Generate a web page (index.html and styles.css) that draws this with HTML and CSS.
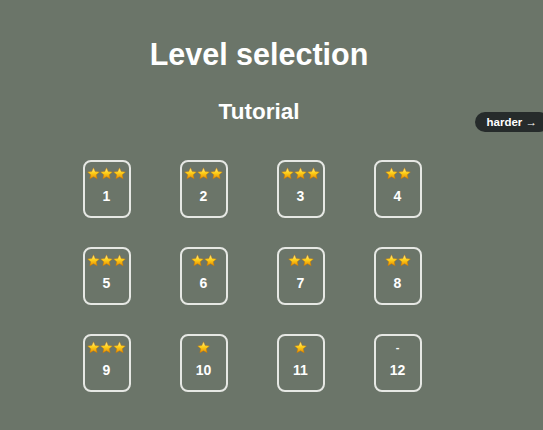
FILE: index.html
```html
<!DOCTYPE html>
<html lang="en">
<head>
    <meta charset="UTF-8">
    <meta name="viewport" content="width=device-width, initial-scale=1.0">
    <title>Level selection</title>
    <link rel="stylesheet" href="styles.css">
</head>
<body>
    <svg width="0" height="0" class="defs">
        <defs>
            <linearGradient id="gold" x1="0" y1="0" x2="0" y2="1">
                <stop offset="0" stop-color="#fff3a0"/>
                <stop offset="0.45" stop-color="#ffd21a"/>
                <stop offset="1" stop-color="#e88a00"/>
            </linearGradient>
            <symbol id="star" viewBox="0 0 24 24">
                <path d="M12 1.5l3.2 7 7.6.8-5.7 5.1 1.6 7.5L12 18l-6.7 3.9 1.6-7.5L1.2 9.3l7.6-.8z" fill="url(#gold)" stroke="#c97a00" stroke-width="0.8"/>
            </symbol>
        </defs>
    </svg>

    <div class="harder">harder &rarr;</div>

    <div class="page">
        <h1 class="title">Level selection</h1>
        <h2 class="subtitle">Tutorial</h2>

        <div class="levels">
            <div class="level"><div class="stars"><svg><use href="#star"/></svg><svg><use href="#star"/></svg><svg><use href="#star"/></svg></div><div class="num">1</div></div>
            <div class="level"><div class="stars"><svg><use href="#star"/></svg><svg><use href="#star"/></svg><svg><use href="#star"/></svg></div><div class="num">2</div></div>
            <div class="level"><div class="stars"><svg><use href="#star"/></svg><svg><use href="#star"/></svg><svg><use href="#star"/></svg></div><div class="num">3</div></div>
            <div class="level"><div class="stars"><svg><use href="#star"/></svg><svg><use href="#star"/></svg></div><div class="num">4</div></div>

            <div class="level"><div class="stars"><svg><use href="#star"/></svg><svg><use href="#star"/></svg><svg><use href="#star"/></svg></div><div class="num">5</div></div>
            <div class="level"><div class="stars"><svg><use href="#star"/></svg><svg><use href="#star"/></svg></div><div class="num">6</div></div>
            <div class="level"><div class="stars"><svg><use href="#star"/></svg><svg><use href="#star"/></svg></div><div class="num">7</div></div>
            <div class="level"><div class="stars"><svg><use href="#star"/></svg><svg><use href="#star"/></svg></div><div class="num">8</div></div>

            <div class="level"><div class="stars"><svg><use href="#star"/></svg><svg><use href="#star"/></svg><svg><use href="#star"/></svg></div><div class="num">9</div></div>
            <div class="level"><div class="stars"><svg><use href="#star"/></svg></div><div class="num">10</div></div>
            <div class="level"><div class="stars"><svg><use href="#star"/></svg></div><div class="num">11</div></div>
            <div class="level"><div class="stars"><span class="dash">-</span></div><div class="num">12</div></div>
        </div>
    </div>
</body>
</html>
```

FILE: styles.css
```css
body {
    margin: 0;
    background-color: #6b7569;
    font-family: "Liberation Sans", Arial, sans-serif;
    color: #ffffff;
    height: 100vh;
    overflow: hidden;
    position: relative;
}
.defs {
    position: absolute;
}
.page {
    width: 504px;
    display: flex;
    flex-direction: column;
    align-items: center;
    padding-top: 36px;
}
.title {
    margin: 0;
    font-size: 30.5px;
    font-weight: bold;
    line-height: 36px;
    padding-left: 14px;
}
.subtitle {
    margin: 26px 0 0 0;
    font-size: 22.5px;
    font-weight: bold;
    line-height: 27px;
    padding-left: 14px;
}
.harder {
    position: absolute;
    top: 112px;
    right: -6px;
    background: #262b2b;
    color: #fff;
    font-size: 11.5px;
    font-weight: bold;
    line-height: 20px;
    padding: 0 12px 0 12px;
    border-radius: 10px;
}
.levels {
    display: grid;
    grid-template-columns: repeat(4, 48px);
    column-gap: 49px;
    row-gap: 29px;
    margin-top: 35px;
}
.level {
    box-sizing: border-box;
    width: 48px;
    height: 58px;
    border: 2px solid #e6e8e4;
    border-radius: 8px;
    display: flex;
    flex-direction: column;
    align-items: center;
    padding-top: 5px;
}
.stars {
    display: flex;
    height: 12px;
    align-items: center;
}
.stars svg {
    width: 13px;
    height: 13px;
}
.dash {
    font-size: 11px;
    font-weight: bold;
    line-height: 12px;
}
.num {
    margin-top: 9px;
    font-size: 14px;
    font-weight: bold;
    line-height: 16px;
}
```
